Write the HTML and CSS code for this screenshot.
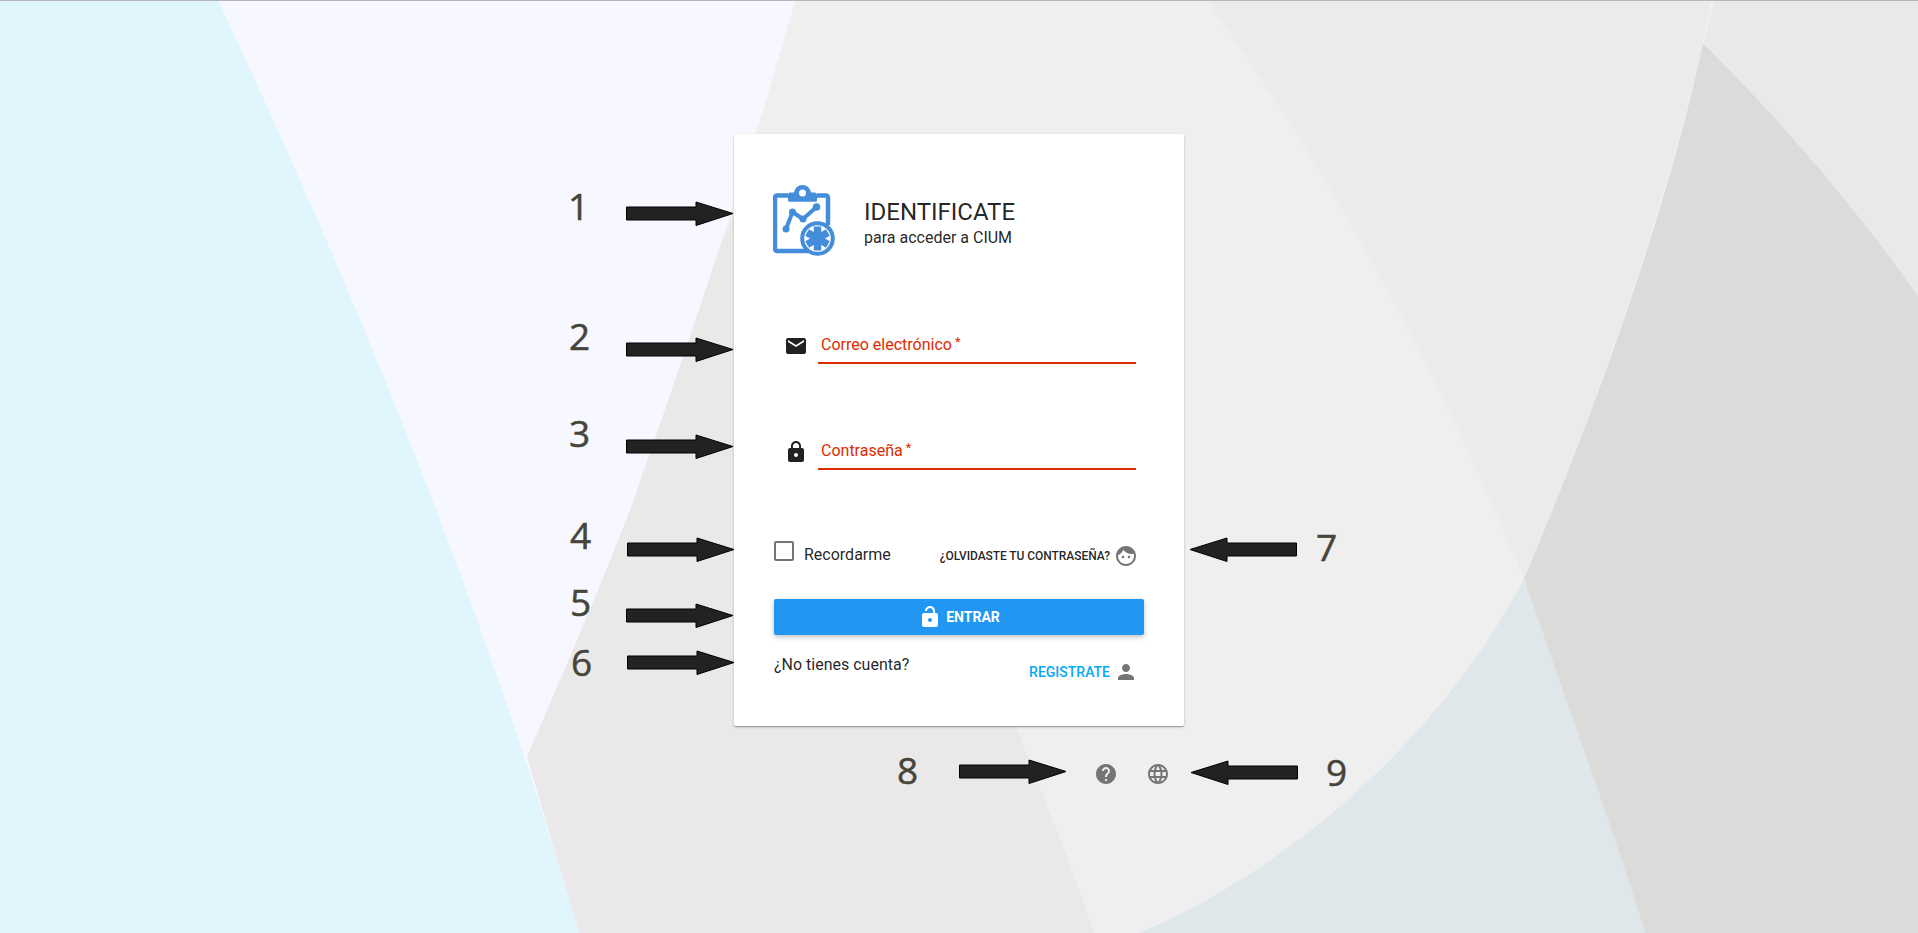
FILE: index.html
```html
<!DOCTYPE html>
<html lang="es">
<head>
<meta charset="utf-8">
<title>CIUM</title>
<link rel="stylesheet" href="styles.css">
</head>
<body>
<svg class="backdrop" viewBox="0 0 1918 933" preserveAspectRatio="none" aria-hidden="true">
  <rect class="bg-light" width="1918" height="933"/>
  <path class="bg-mid" d="M1206 0C1310 140 1430 350 1524 579C1600 400 1680 160 1713 0Z"/>
  <path class="bg-pale" d="M1713 0H1918V296C1850 200 1780 120 1703 43Z"/>
  <path class="bg-stone" d="M1703 43C1780 120 1850 200 1918 296V933H1645C1610 820 1565 700 1524 579C1600 400 1670 200 1703 43Z"/>
  <path class="bg-mist" d="M1524 579C1450 720 1310 860 1139 933H1645C1610 820 1565 700 1524 579Z"/>
  <path class="bg-seam" d="M1713 0L1703 43"/>
  <path class="bg-rose" d="M733 217L1016 726C1040 790 1070 860 1094 933H500V757Z"/>
  <path class="bg-lavender" d="M218 0H795C760 130 690 340 630 510C595 600 560 680 527 757L579 933H218Z"/>
  <path class="bg-sky" d="M0 0H218C364 311 489 622 579 933H0Z"/>
</svg>

<main class="page">
  <section class="card">
    <header class="card-head">
      <svg class="logo" viewBox="13 10 64 74" aria-hidden="true">
        <path class="logo-line" d="M28 20.500H17a2 2 0 0 0-2 2V74a2 2 0 0 0 2 2H48M57 20.500H66a2 2 0 0 1 2 2V50"/>
        <path class="logo-fill" fill-rule="evenodd" d="M29 26.700a1.500 1.500 0 0 1-1-1.500V20a2.500 2.500 0 0 1 2.500-2.500H34C35 13 38 10 42.500 10S50 13 51 17.500H54.500A2.500 2.500 0 0 1 57 20V25.200a1.500 1.500 0 0 1-1.500 1.500ZM42.500 14.500a3.500 3.500 0 1 0 0 7 3.500 3.500 0 0 0 0-7Z"/>
        <polyline class="logo-chart" points="26,54 32.500,37 43,44 56.500,32"/>
        <circle class="logo-fill" cx="26" cy="54" r="3.500"/>
        <circle class="logo-fill" cx="32.500" cy="37" r="3.500"/>
        <circle class="logo-fill" cx="43" cy="44" r="3.500"/>
        <circle class="logo-fill" cx="56.500" cy="32" r="3.800"/>
        <circle class="logo-ring" cx="57.500" cy="63.500" r="15.300"/>
        <g class="logo-star">
          <path d="M57.500 51.500V75.500"/>
          <path d="M47.100 57.500L67.900 69.500"/>
          <path d="M47.100 69.500L67.900 57.500"/>
        </g>
      </svg>
      <div class="card-title">
        <h1 class="title">IDENTIFICATE</h1>
        <p class="subtitle">para acceder a CIUM</p>
      </div>
    </header>

    <div class="field field-first">
      <svg class="icon icon-dark" viewBox="0 0 24 24" aria-hidden="true"><path d="M20 4H4c-1.100 0-1.990.900-1.990 2L2 18c0 1.100.900 2 2 2h16c1.100 0 2-.900 2-2V6c0-1.100-.900-2-2-2zm0 4l-8 5-8-5V6l8 5 8-5v2z"/></svg>
      <label class="input">Correo electrónico<span class="req">*</span></label>
    </div>

    <div class="field field-second">
      <svg class="icon icon-dark" viewBox="0 0 24 24" aria-hidden="true"><path d="M18 8h-1V6c0-2.760-2.240-5-5-5S7 3.240 7 6v2H6c-1.100 0-2 .900-2 2v10c0 1.100.900 2 2 2h12c1.100 0 2-.900 2-2V10c0-1.100-.900-2-2-2zm-6 9c-1.100 0-2-.900-2-2s.900-2 2-2 2 .900 2 2-.900 2-2 2zm3.100-9H8.900V6c0-1.710 1.390-3.100 3.100-3.100 1.710 0 3.100 1.390 3.100 3.100v2z"/></svg>
      <label class="input">Contraseña<span class="req">*</span></label>
    </div>

    <div class="options">
      <div class="remember">
        <span class="checkbox"></span>
        <span class="remember-text">Recordarme</span>
      </div>
      <a class="forgot">
        <span class="forgot-text">¿OLVIDASTE TU CONTRASEÑA?</span>
        <svg class="icon icon-gray" viewBox="0 0 24 24" aria-hidden="true"><path d="M9 11.750c-.690 0-1.250.560-1.250 1.250s.560 1.250 1.250 1.250 1.250-.560 1.250-1.250-.560-1.250-1.250-1.250zm6 0c-.690 0-1.250.560-1.250 1.250s.560 1.250 1.250 1.250 1.250-.560 1.250-1.250-.560-1.250-1.250-1.250zM12 2C6.480 2 2 6.480 2 12s4.480 10 10 10 10-4.480 10-10S17.520 2 12 2zm0 18c-4.410 0-8-3.590-8-8 0-.290.020-.580.050-.860 2.360-1.050 4.230-2.980 5.210-5.370C11.070 8.330 14.050 10 17.420 10c.780 0 1.530-.090 2.250-.260.210.710.330 1.470.330 2.260 0 4.410-3.590 8-8 8z"/></svg>
      </a>
    </div>

    <button class="submit" type="button">
      <svg class="icon icon-white" viewBox="0 0 24 24" aria-hidden="true"><path d="M18 8h-1V6c0-2.760-2.240-5-5-5S7 3.240 7 6h1.900c0-1.710 1.390-3.100 3.100-3.100 1.710 0 3.100 1.390 3.100 3.100v2H6c-1.100 0-2 .900-2 2v10c0 1.100.900 2 2 2h12c1.100 0 2-.900 2-2V10c0-1.100-.900-2-2-2zm-6 9c-1.100 0-2-.900-2-2s.900-2 2-2 2 .900 2 2-.900 2-2 2z"/></svg>
      <span>ENTRAR</span>
    </button>

    <div class="signup">
      <span class="signup-text">¿No tienes cuenta?</span>
      <a class="register">
        <span class="register-text">REGISTRATE</span>
        <svg class="icon icon-gray" viewBox="0 0 24 24" aria-hidden="true"><path d="M12 12c2.210 0 4-1.790 4-4s-1.790-4-4-4-4 1.790-4 4 1.790 4 4 4zm0 2c-2.670 0-8 1.340-8 4v2h16v-2c0-2.660-5.330-4-8-4z"/></svg>
      </a>
    </div>
  </section>

  <nav class="tools">
    <svg class="icon icon-gray" viewBox="0 0 24 24" aria-hidden="true"><path d="M12 2C6.480 2 2 6.480 2 12s4.480 10 10 10 10-4.480 10-10S17.520 2 12 2zm1 17h-2v-2h2v2zm2.070-7.750l-.900.920C13.450 12.900 13 13.500 13 15h-2v-.500c0-1.100.450-2.100 1.170-2.830l1.240-1.260c.370-.360.590-.860.590-1.410 0-1.100-.900-2-2-2s-2 .900-2 2H8c0-2.210 1.790-4 4-4s4 1.790 4 4c0 .880-.360 1.680-.930 2.250z"/></svg>
    <svg class="icon icon-gray" viewBox="0 0 24 24" aria-hidden="true"><path d="M11.990 2C6.470 2 2 6.480 2 12s4.470 10 9.990 10C17.520 22 22 17.520 22 12S17.520 2 11.990 2zm6.930 6h-2.950c-.320-1.250-.780-2.450-1.380-3.560 1.840.630 3.370 1.910 4.330 3.560zM12 4.040c.830 1.200 1.480 2.530 1.910 3.960h-3.820c.430-1.430 1.080-2.760 1.910-3.960zM4.260 14C4.100 13.360 4 12.690 4 12s.100-1.360.260-2h3.380c-.080.660-.140 1.320-.140 2 0 .680.060 1.340.140 2H4.260zm.820 2h2.950c.320 1.250.780 2.450 1.380 3.560-1.840-.630-3.370-1.900-4.330-3.560zm2.950-8H5.080c.960-1.660 2.490-2.930 4.330-3.560C8.810 5.550 8.350 6.750 8.030 8zM12 19.960c-.830-1.200-1.480-2.530-1.910-3.960h3.820c-.430 1.430-1.080 2.760-1.910 3.960zM14.340 14H9.660c-.090-.660-.160-1.320-.160-2 0-.680.070-1.350.160-2h4.680c.090.650.160 1.320.160 2 0 .680-.070 1.340-.160 2zm.250 5.560c.600-1.110 1.060-2.310 1.380-3.560h2.950c-.960 1.650-2.490 2.930-4.330 3.560zM16.360 14c.080-.660.140-1.320.140-2 0-.680-.060-1.340-.140-2h3.380c.160.640.260 1.310.260 2s-.100 1.360-.260 2h-3.380z"/></svg>
  </nav>
</main>

<div class="notes">
  <span class="num num-1">1</span><svg class="arrow arrow-1" viewBox="0 0 108 27"><path d="M.5 7H70V2L107 13.500 70 25.500V20H.5Z"/></svg>
  <span class="num num-2">2</span><svg class="arrow arrow-2" viewBox="0 0 108 27"><path d="M.5 7H70V2L107 13.500 70 25.500V20H.5Z"/></svg>
  <span class="num num-3">3</span><svg class="arrow arrow-3" viewBox="0 0 108 27"><path d="M.5 7H70V2L107 13.500 70 25.500V20H.5Z"/></svg>
  <span class="num num-4">4</span><svg class="arrow arrow-4" viewBox="0 0 108 27"><path d="M.5 7H70V2L107 13.500 70 25.500V20H.5Z"/></svg>
  <span class="num num-5">5</span><svg class="arrow arrow-5" viewBox="0 0 108 27"><path d="M.5 7H70V2L107 13.500 70 25.500V20H.5Z"/></svg>
  <span class="num num-6">6</span><svg class="arrow arrow-6" viewBox="0 0 108 27"><path d="M.5 7H70V2L107 13.500 70 25.500V20H.5Z"/></svg>
  <span class="num num-7">7</span><svg class="arrow arrow-7 arrow-back" viewBox="0 0 108 27"><path d="M.5 7H70V2L107 13.500 70 25.500V20H.5Z"/></svg>
  <span class="num num-8">8</span><svg class="arrow arrow-8" viewBox="0 0 108 27"><path d="M.5 7H70V2L107 13.500 70 25.500V20H.5Z"/></svg>
  <span class="num num-9">9</span><svg class="arrow arrow-9 arrow-back" viewBox="0 0 108 27"><path d="M.5 7H70V2L107 13.500 70 25.500V20H.5Z"/></svg>
</div>
</body>
</html>
```

FILE: styles.css
```css
* { box-sizing: border-box; }
html, body { margin: 0; height: 100%; }
body {
  position: relative;
  overflow: hidden;
  font-family: Roboto, "Liberation Sans", sans-serif;
  color: rgba(0, 0, 0, .87);
  background: #efefef;
}
body::before {
  content: "";
  position: absolute;
  inset: 0 0 auto 0;
  height: 1px;
  background: #b4b6b8;
  z-index: 3;
}

.backdrop { position: absolute; inset: 0; width: 100%; height: 100%; display: block; }
.bg-light { fill: #efefef; }
.bg-mid { fill: #ebebeb; }
.bg-pale { fill: #e8eae7; }
.bg-stone { fill: #dbdcd9; }
.bg-mist { fill: #dfe7ea; }
.bg-rose { fill: #eae8e9; }
.bg-lavender { fill: #f7f8ff; }
.bg-sky { fill: #e1f5fd; }
.bg-seam { fill: none; stroke: #f6f6f6; stroke-width: 1; }

.page {
  position: relative;
  display: flex;
  flex-direction: column;
  align-items: center;
  padding-top: 134px;
}

.card {
  width: 450px;
  padding: 51px 40px 42px;
  background: #fff;
  border-radius: 2px;
  box-shadow: 0 1px 3px rgba(0,0,0,.2), 0 1px 1px rgba(0,0,0,.14), 0 2px 1px -1px rgba(0,0,0,.12);
}

.card-head { display: flex; align-items: flex-start; margin-left: -1px; }
.logo { width: 64px; height: 74px; flex: none; margin-right: 27px; display: block; }
.logo-line { fill: none; stroke: #448ddb; stroke-width: 4.500; }
.logo-fill { fill: #448ddb; }
.logo-chart { fill: none; stroke: #448ddb; stroke-width: 4; stroke-linejoin: round; }
.logo-ring { fill: #fff; stroke: #448ddb; stroke-width: 4; }
.logo-star path { fill: none; stroke: #448ddb; stroke-width: 7.500; }

.card-title { padding-top: 12px; }
.title { margin: 0; font-size: 24px; line-height: 30px; font-weight: 400; }
.subtitle { margin: 1px 0 0; font-size: 16px; line-height: 20px; letter-spacing: 0; }

.field { display: flex; align-items: flex-start; margin-right: 8px; padding-left: 10px; gap: 10px; }
.field-first { margin-top: 73px; }
.field-second { margin-top: 74px; }
.input {
  flex: 1;
  height: 32px;
  padding: 1px 0 0 3px;
  font-size: 16px;
  line-height: 24px;
  color: #dd2c00;
  border-bottom: 2px solid #dd2c00;
}
.req { font-size: 13px; vertical-align: top; line-height: 17px; margin-left: 3px; }

.icon { width: 24px; height: 24px; flex: none; display: block; }
.field .icon { margin-top: 2px; }
.icon-dark { fill: #212121; }
.icon-gray { fill: #757575; }
.icon-white { fill: #fff; }

.options { display: flex; justify-content: space-between; margin: 71px 6px 0 0; }
.remember { display: flex; gap: 10px; }
.checkbox { width: 20px; height: 20px; border: 2px solid #757575; border-radius: 2px; }
.remember-text { margin-top: 2px; font-size: 16px; line-height: 24px; }
.forgot { display: flex; align-items: center; gap: 4px; margin-top: 3px; }
.forgot-text { font-size: 12px; font-weight: 500; line-height: 24px; letter-spacing: -.06px; }

.submit {
  display: flex;
  align-items: center;
  justify-content: center;
  gap: 4px;
  width: 100%;
  height: 36px;
  margin-top: 31px;
  border: 0;
  border-radius: 2px;
  background: #2196f3;
  color: #fff;
  font: 700 14px/20px Roboto, "Liberation Sans", sans-serif;
  box-shadow: 0 2px 5px rgba(0,0,0,.26);
}

.signup { display: flex; justify-content: space-between; align-items: flex-start; margin: 20px 6px 0 0; }
.signup-text { font-size: 16px; line-height: 20px; }
.register { display: flex; align-items: center; gap: 4px; margin-top: 5px; }
.register-text { font-size: 14px; font-weight: 500; color: #03a9f4; line-height: 24px; }

.tools { display: flex; gap: 28px; width: 450px; justify-content: flex-end; padding-right: 14px; margin-top: 36px; }

.notes .num {
  position: absolute;
  font-family: "Open Sans", "Noto Sans", sans-serif;
  font-size: 37px;
  line-height: 40px;
  color: #45453a;
  -webkit-text-stroke: .5px #45453a;
}
.num-1 { left: 568px; top: 186px; }
.num-2 { left: 569px; top: 316px; }
.num-3 { left: 569px; top: 413px; }
.num-4 { left: 570px; top: 515px; }
.num-5 { left: 570px; top: 582px; }
.num-6 { left: 571px; top: 642px; }
.num-7 { left: 1316px; top: 527px; }
.num-8 { left: 897px; top: 750px; }
.num-9 { left: 1326px; top: 752px; }

.arrow { position: absolute; width: 108px; height: 27px; fill: #222; stroke: #000; stroke-width: 1; }
.arrow-back { transform: scaleX(-1); }
.arrow-1 { left: 626px; top: 200px; }
.arrow-2 { left: 626px; top: 336px; }
.arrow-3 { left: 626px; top: 433px; }
.arrow-4 { left: 627px; top: 536px; }
.arrow-5 { left: 626px; top: 602px; }
.arrow-6 { left: 627px; top: 649px; }
.arrow-7 { left: 1189px; top: 536px; }
.arrow-8 { left: 959px; top: 758px; }
.arrow-9 { left: 1190px; top: 759px; }
```
